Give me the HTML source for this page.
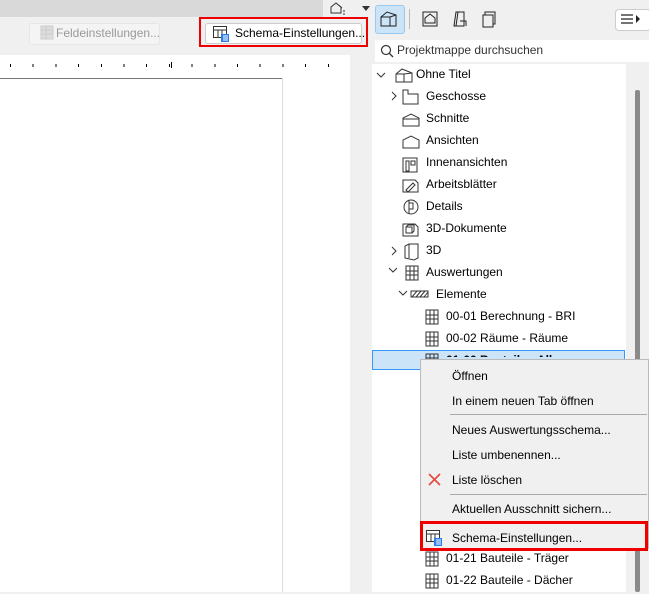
<!DOCTYPE html><html><head><style>
body{margin:0;width:649px;height:592px;overflow:hidden;background:#f0f0f0;font-family:"Segoe UI","Liberation Sans",sans-serif;font-size:12px;color:#000;position:relative}
.a{position:absolute}
.t{position:absolute;white-space:nowrap;font-size:12px}
svg{position:absolute}
</style></head><body>
<div class="a" style="left:0;top:0;width:323px;height:17px;background:#d9d9d9"></div>
<div class="a" style="left:29px;top:23px;width:129px;height:20px;border:1px solid #e6e6e6;border-radius:3px;background:#f4f4f4"></div>
<svg style="left:40px;top:25px" width="16" height="16"><rect x="1" y="1" width="12" height="13" fill="#ddd" stroke="#ccc"/><path d="M1 5h12M1 9h12M6 1v13" stroke="#ccc"/></svg>
<div class="t" style="left:56px;top:26px;color:#999">Feldeinstellungen...</div>
<div class="a" style="left:199px;top:17px;width:165px;height:26px;border:2px solid #e00;"></div>
<div class="a" style="left:205px;top:23px;width:155px;height:19px;border:1px solid #ccc;border-radius:3px;background:#fff"></div>
<svg style="left:213px;top:26px" width="20" height="17"><rect x="0.5" y="0.5" width="13" height="11" fill="#fff" stroke="#333"/><path d="M0.5 4h13M5 4v8M9 4v8" stroke="#333"/><rect x="8" y="8" width="8" height="8" fill="#2b7de9"/><path d="M10 10h5M10 12h5M10 14h5" stroke="#fff"/></svg>
<div class="t" style="left:235px;top:26px;color:#000">Schema-Einstellungen...</div>
<div class="a" style="left:0;top:55px;width:350px;height:537px;background:#fff"></div>
<div class="a" style="left:0;top:78px;width:282px;height:1px;background:#777"></div>
<div class="a" style="left:282px;top:78px;width:1px;height:514px;background:#ddd"></div>
<div class="a" style="left:10px;top:64px;width:324px;height:3px;background:repeating-linear-gradient(90deg,#000 0 1px,transparent 1px 22.7px)"></div>
<div class="a" style="left:171px;top:62px;width:1px;height:6px;background:#000"></div>
<svg style="left:330px;top:2px" width="40" height="14"><path d="M1 11V5l5-4 5 4v6zM6 1l6 5" fill="none" stroke="#333"/><path d="M13 9h2M13 12h2" stroke="#333"/><path d="M32 4h8l-4 5z" fill="#333"/></svg>
<div class="a" style="left:375px;top:5px;width:28px;height:27px;background:#cce4f7;border:1px solid #99c9ef;border-radius:3px"></div>
<svg style="left:379px;top:10px" width="20" height="18"><path d="M2 16V7l6-5 9 3v11zM2 7h9l6-2M11 7v9" fill="none" stroke="#222"/></svg>
<div class="a" style="left:409px;top:9px;width:1px;height:20px;background:#bbb"></div>
<svg style="left:420px;top:9px" width="90" height="20"><rect x="3" y="3" width="14" height="14" fill="none" stroke="#222"/><path d="M5 14V9l5-4 5 4v5z" fill="none" stroke="#222"/><path d="M34 17l2-14h8v14zM38 3l-2 14M40 12h6v5" fill="none" stroke="#222"/><rect x="63" y="6" width="10" height="12" fill="none" stroke="#222"/><path d="M65 6V3h10v12h-2" fill="none" stroke="#222"/></svg>
<div class="a" style="left:615px;top:9px;width:34px;height:20px;border:1px solid #ccc;border-radius:4px;background:#fff"></div>
<svg style="left:621px;top:13px" width="28" height="12"><path d="M0 2h12M0 6h12M0 10h12" stroke="#222" stroke-width="1.3"/><path d="M15 2l4 4-4 4z" fill="#222"/></svg>
<div class="a" style="left:375px;top:40px;width:274px;height:22px;background:#fff"></div>
<svg style="left:380px;top:44px" width="14" height="14"><circle cx="6" cy="6" r="4.5" fill="none" stroke="#333" stroke-width="1.2"/><path d="M9 9l4 4" stroke="#333" stroke-width="1.3"/></svg>
<div class="t" style="left:397px;top:43px;color:#333">Projektmappe durchsuchen</div>
<div class="a" style="left:372px;top:64px;width:254px;height:528px;background:#fff"></div>
<div class="a" style="left:635px;top:90px;width:5px;height:502px;background:#8a8a8a;border-radius:2px"></div>
<div class="a" style="left:372px;top:350px;width:253px;height:20px;background:#cce4f7;border:1px solid #3399ff;box-sizing:border-box"></div>
<svg style="left:374px;top:64px" width="180" height="530" fill="none" stroke="#333">
<path d="M3 9l4 4 4-4"/><path d="M22 18V10l6-5 10 4v9zM22 10h8l8-1M30 10v8"/>
<path d="M18 28l4 4-4 4"/><path d="M29 26h5v4h10v10H29z"/>
<path d="M29 62v-8l8-4 8 4v8zM29 55h16"/>
<path d="M29 84v-8l8-4 8 4v8z"/>
<rect x="29" y="94" width="14" height="14"/><rect x="32" y="97" width="3" height="10"/><rect x="37" y="97" width="4" height="4"/>
<path d="M29 128v-12h12l3 3v9zM32 126l7-7 2 2-7 7z"/>
<circle cx="37" cy="143" r="7"/><path d="M35 136v14M35 139h4v6h-4"/>
<path d="M29 172v-12h12l3 3v9zM32 163h6v6h-6zM32 163l2-2h6v6l-2 2"/>
<path d="M18 183l4 4-4 4"/><path d="M31 194v-12l4-2h9v14l-4 2zM35 180v14"/>
<path d="M15 204l4 4 4-4"/><rect x="32" y="202" width="12" height="14"/><path d="M32 207h12M32 211h12M36 202v14M40 202v14"/>
<path d="M25 227l4 4 4-4"/><rect x="37" y="227" width="17" height="6"/><path d="M38 233l5-6M42 233l5-6M46 233l5-6M50 233l4-5"/>
<rect x="52" y="246" width="12" height="14"/><path d="M52 251h12M52 255h12M56 246v14M60 246v14"/>
<rect x="52" y="268" width="12" height="14"/><path d="M52 273h12M52 277h12M56 268v14M60 268v14"/>
<rect x="52" y="290" width="12" height="8"/><path d="M52 294h12M56 290v8M60 290v8"/>
<rect x="52" y="488" width="12" height="14"/><path d="M52 493h12M52 497h12M56 488v14M60 488v14"/>
<rect x="52" y="510" width="12" height="14"/><path d="M52 515h12M52 519h12M56 510v14M60 510v14"/>
</svg>
<div class="t" style="left:416px;top:67px">Ohne Titel</div>
<div class="t" style="left:426px;top:89px">Geschosse</div>
<div class="t" style="left:426px;top:111px">Schnitte</div>
<div class="t" style="left:426px;top:133px">Ansichten</div>
<div class="t" style="left:426px;top:155px">Innenansichten</div>
<div class="t" style="left:426px;top:177px">Arbeitsblätter</div>
<div class="t" style="left:426px;top:199px">Details</div>
<div class="t" style="left:426px;top:221px">3D-Dokumente</div>
<div class="t" style="left:426px;top:243px">3D</div>
<div class="t" style="left:426px;top:265px">Auswertungen</div>
<div class="t" style="left:436px;top:287px">Elemente</div>
<div class="t" style="left:446px;top:309px">00-01 Berechnung - BRI</div>
<div class="t" style="left:446px;top:331px">00-02 Räume - Räume</div>
<div class="t" style="left:446px;top:551px">01-21 Bauteile - Träger</div>
<div class="t" style="left:446px;top:573px">01-22 Bauteile - Dächer</div>
<div class="a" style="left:420px;top:359px;width:229px;height:190px;background:#f0f0f0;border:1px solid #bbb;box-sizing:border-box"></div>
<div class="t" style="left:452px;top:369px">Öffnen</div>
<div class="t" style="left:452px;top:394px">In einem neuen Tab öffnen</div>
<div class="a" style="left:450px;top:414px;width:197px;height:1px;background:#aaa"></div>
<div class="t" style="left:452px;top:423px">Neues Auswertungsschema...</div>
<div class="t" style="left:452px;top:448px">Liste umbenennen...</div>
<svg style="left:428px;top:473px" width="14" height="14"><path d="M1 1l11 11M12 1L1 12" stroke="#e8453c" stroke-width="1.6"/></svg>
<div class="t" style="left:452px;top:473px">Liste löschen</div>
<div class="a" style="left:450px;top:494px;width:197px;height:1px;background:#aaa"></div>
<div class="t" style="left:452px;top:502px">Aktuellen Ausschnitt sichern...</div>
<div class="a" style="left:420px;top:521px;width:228px;height:30px;border:3px solid #e00;box-sizing:border-box"></div>
<svg style="left:426px;top:530px" width="20" height="17"><rect x="0.5" y="0.5" width="13" height="11" fill="#fff" stroke="#333"/><path d="M0.5 4h13M5 4v8M9 4v8" stroke="#333"/><rect x="8" y="8" width="8" height="8" fill="#2b7de9"/><path d="M10 10h5M10 12h5M10 14h5" stroke="#fff"/></svg>
<div class="t" style="left:452px;top:531px">Schema-Einstellungen...</div>
<div class="t" style="left:446px;top:353px;font-weight:bold;clip-path:inset(0 0 10px 0)">01-00 Bauteile - Alle</div>
</body></html>
